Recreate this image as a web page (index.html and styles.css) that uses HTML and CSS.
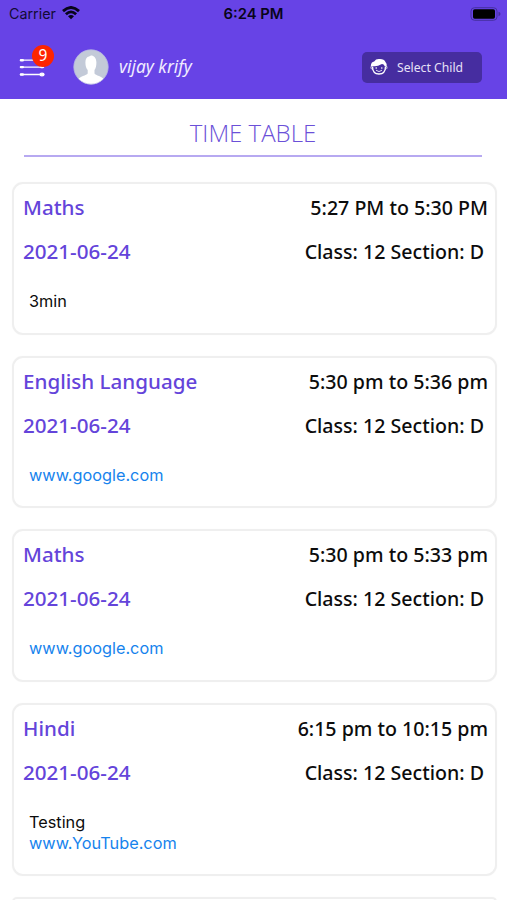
FILE: index.html
```html
<!DOCTYPE html>
<html lang="en">
<head>
<meta charset="utf-8">
<title>Time Table</title>
<link rel="stylesheet" href="styles.css">
</head>
<body>
<header class="header">
  <div class="status">
    <div class="carrier">Carrier
      <svg width="18" height="14" viewBox="0 0 18 14" fill="none" stroke="#08051a" stroke-width="2.8"><path d="M1 5.1Q9-2.2 17 5.1M3.9 8.2Q9 3.6 14.1 8.2"/><path d="M6 10.2Q9 7.6 12 10.2L9 13.3Z" fill="#08051a" stroke="none"/></svg>
    </div>
    <div class="clock">6:24 PM</div>
    <svg class="battery" width="32" height="14" viewBox="0 0 32 14"><rect x="1" y=".7" width="26" height="12.6" rx="3.5" fill="none" stroke="#4630a0"/><rect x="3" y="2.2" width="22" height="9.6" rx="1.7" fill="#000"/><path d="M28.5 4.8q2 .6 2 2.2t-2 2.2z" fill="#4630a0"/></svg>
  </div>
  <div class="bar">
    <div class="menu">
      <svg width="28" height="20" viewBox="0 0 28 20" stroke="#fff" stroke-width="1.3" stroke-linecap="round" fill="#fff"><path d="M2.4 3.2H25.6M2.4 10.1H25.6M2.4 17.5H25.6"/><path d="M3 3.2H4.8M3 10.1H4.8M3 17.5H4.8" stroke-width="2.4"/><path d="M23 10.1H25" stroke-width="2.2"/><ellipse cx="24" cy="17.5" rx="2" ry="1.3"/></svg>
      <span class="badge">9</span>
    </div>
    <svg class="avatar" width="36" height="36" viewBox="0 0 36 36"><defs><clipPath id="face"><circle cx="18" cy="18" r="17.2"/></clipPath></defs><circle cx="18" cy="18" r="17.2" fill="#c3cad8"/><path clip-path="url(#face)" fill="#fff" d="M18 6.5C20.8 6.5 23.4 9 23.4 13.5C23.4 17 22.7 19.5 21.5 21V24.5C22.5 26.5 29 27 32 31.5V36H4V31.5C7 27 13.5 26.5 14.7 24.5V21C13.3 19.5 12.4 17 12.4 13.5C12.4 10.2 13.8 7.8 16 7.6Z"/><circle cx="18" cy="18" r="17.2" fill="none" stroke="#b6b5e5" stroke-width=".8"/></svg>
    <div class="user">vijay krify</div>
    <button class="child">
      <svg width="18" height="18" viewBox="0 0 18 18"><path d="M2.5 8.5Q2.6 16 9 16T15.5 8.5" fill="none" stroke="#fff" stroke-width="1.3"/><path d="M.8 8Q1 3.8 4.2 3.4Q6 .5 10 1.1Q14.2 1.1 15.6 4.2Q17.5 6 16.6 8.6L14.8 8.2Q13.5 5.6 11.3 6.2Q7 9 2.2 8Z" fill="#fff"/><path d="M2.4 7.6Q.3 8 1 10.2Q1.6 11.6 3 11.2M15.6 7.8Q17.8 8.2 16.8 10.4Q16.2 11.5 15 11.2M6 12.2Q9 15 12 12.2" fill="none" stroke="#fff" stroke-width=".8"/><circle cx="6.2" cy="10" r=".8" fill="#fff"/><circle cx="11.8" cy="10" r=".8" fill="#fff"/></svg>
      <span>Select Child</span>
    </button>
  </div>
</header>
<main>
  <h1>TIME TABLE</h1>
  <section class="card">
    <div class="row"><h2>Maths</h2><span class="time">5:27 PM to 5:30 PM</span></div>
    <div class="row"><h2>2021-06-24</h2><span class="group">Class: 12 Section: D</span></div>
    <div class="note">3min</div>
  </section>
  <section class="card">
    <div class="row"><h2>English Language</h2><span class="time">5:30 pm to 5:36 pm</span></div>
    <div class="row"><h2>2021-06-24</h2><span class="group">Class: 12 Section: D</span></div>
    <div class="note"><a>www.google.com</a></div>
  </section>
  <section class="card">
    <div class="row"><h2>Maths</h2><span class="time">5:30 pm to 5:33 pm</span></div>
    <div class="row"><h2>2021-06-24</h2><span class="group">Class: 12 Section: D</span></div>
    <div class="note"><a>www.google.com</a></div>
  </section>
  <section class="card tall">
    <div class="row"><h2>Hindi</h2><span class="time">6:15 pm to 10:15 pm</span></div>
    <div class="row"><h2>2021-06-24</h2><span class="group">Class: 12 Section: D</span></div>
    <div class="note">Testing<br><a>www.YouTube.com</a></div>
  </section>
  <section class="card next"></section>
</main>
</body>
</html>
```
FILE: styles.css
```css
* { box-sizing: border-box; }
body {
  margin: 0;
  height: 900px;
  overflow: hidden;
  background: #fff;
  color: #0c0c0c;
  font-family: "Noto Sans", sans-serif;
}
.header { height: 98.5px; background: #6743e6; }
.status {
  height: 28px;
  padding: 0 5px 0 9px;
  display: grid;
  grid-template-columns: 1fr auto 1fr;
  align-items: center;
  font: 14.3px/28px Inter, sans-serif;
  color: #130b35;
}
.carrier { display: flex; align-items: center; gap: 6px; }
.carrier svg { margin-top: -2px; }
.clock { margin-right: 4px; font-size: 14.8px; font-weight: 600; color: #08051a; }
.battery { justify-self: end; margin-top: -1px; }
.bar { display: flex; align-items: center; height: 78px; padding: 0 25px 0 18px; }
.menu { position: relative; width: 28px; height: 20px; }
.menu svg { display: block; }
.badge {
  position: absolute;
  left: 14px;
  top: -12px;
  width: 22px;
  height: 22px;
  border-radius: 50%;
  background: #fe2500;
  color: #fff;
  font-size: 15.5px;
  line-height: 21px;
  text-align: center;
}
.avatar { margin-left: 27px; }
.user { margin-left: 10px; font-size: 17.3px; font-style: italic; line-height: 22px; color: #f0ecff; }
.child {
  display: flex;
  align-items: center;
  gap: 9px;
  width: 120px;
  height: 31px;
  margin-left: auto;
  padding: 0 8px;
  border: 0;
  border-radius: 5px;
  background: #462da0;
  color: #e6e1f7;
  font: 12.2px "Noto Sans", sans-serif;
  white-space: nowrap;
}
main { padding: 0 10px 0 12px; }
h1 {
  height: 58.5px;
  margin: 0 15px 25px 12px;
  border-bottom: 2px solid #b7a9f1;
  color: #6b50d8;
  font: 300 24px/68px "Open Sans", sans-serif;
  text-align: center;
}
.card {
  height: 152.5px;
  margin-bottom: 21px;
  padding: 3px 7px 0 9px;
  border: 2px solid #efefef;
  border-radius: 11px;
  box-shadow: 0 0 1px #eee;
}
.tall { height: 173px; }
.next { height: 4px; margin-bottom: 0; border-bottom: 0; border-radius: 11px 11px 0 0; }
.row { display: flex; justify-content: space-between; height: 44px; line-height: 40px; }
h2 { margin: 0; font-size: 20.6px; font-weight: 500; line-height: 40px; color: #6444da; }
.time, .group { font-size: 19.6px; font-weight: 500; line-height: 41px; }
.group { margin-right: 4px; }
.note { padding: 16.4px 0 0 6px; font: 16.3px/21px Inter, sans-serif; }
.note a { color: #1683ed; }
```
